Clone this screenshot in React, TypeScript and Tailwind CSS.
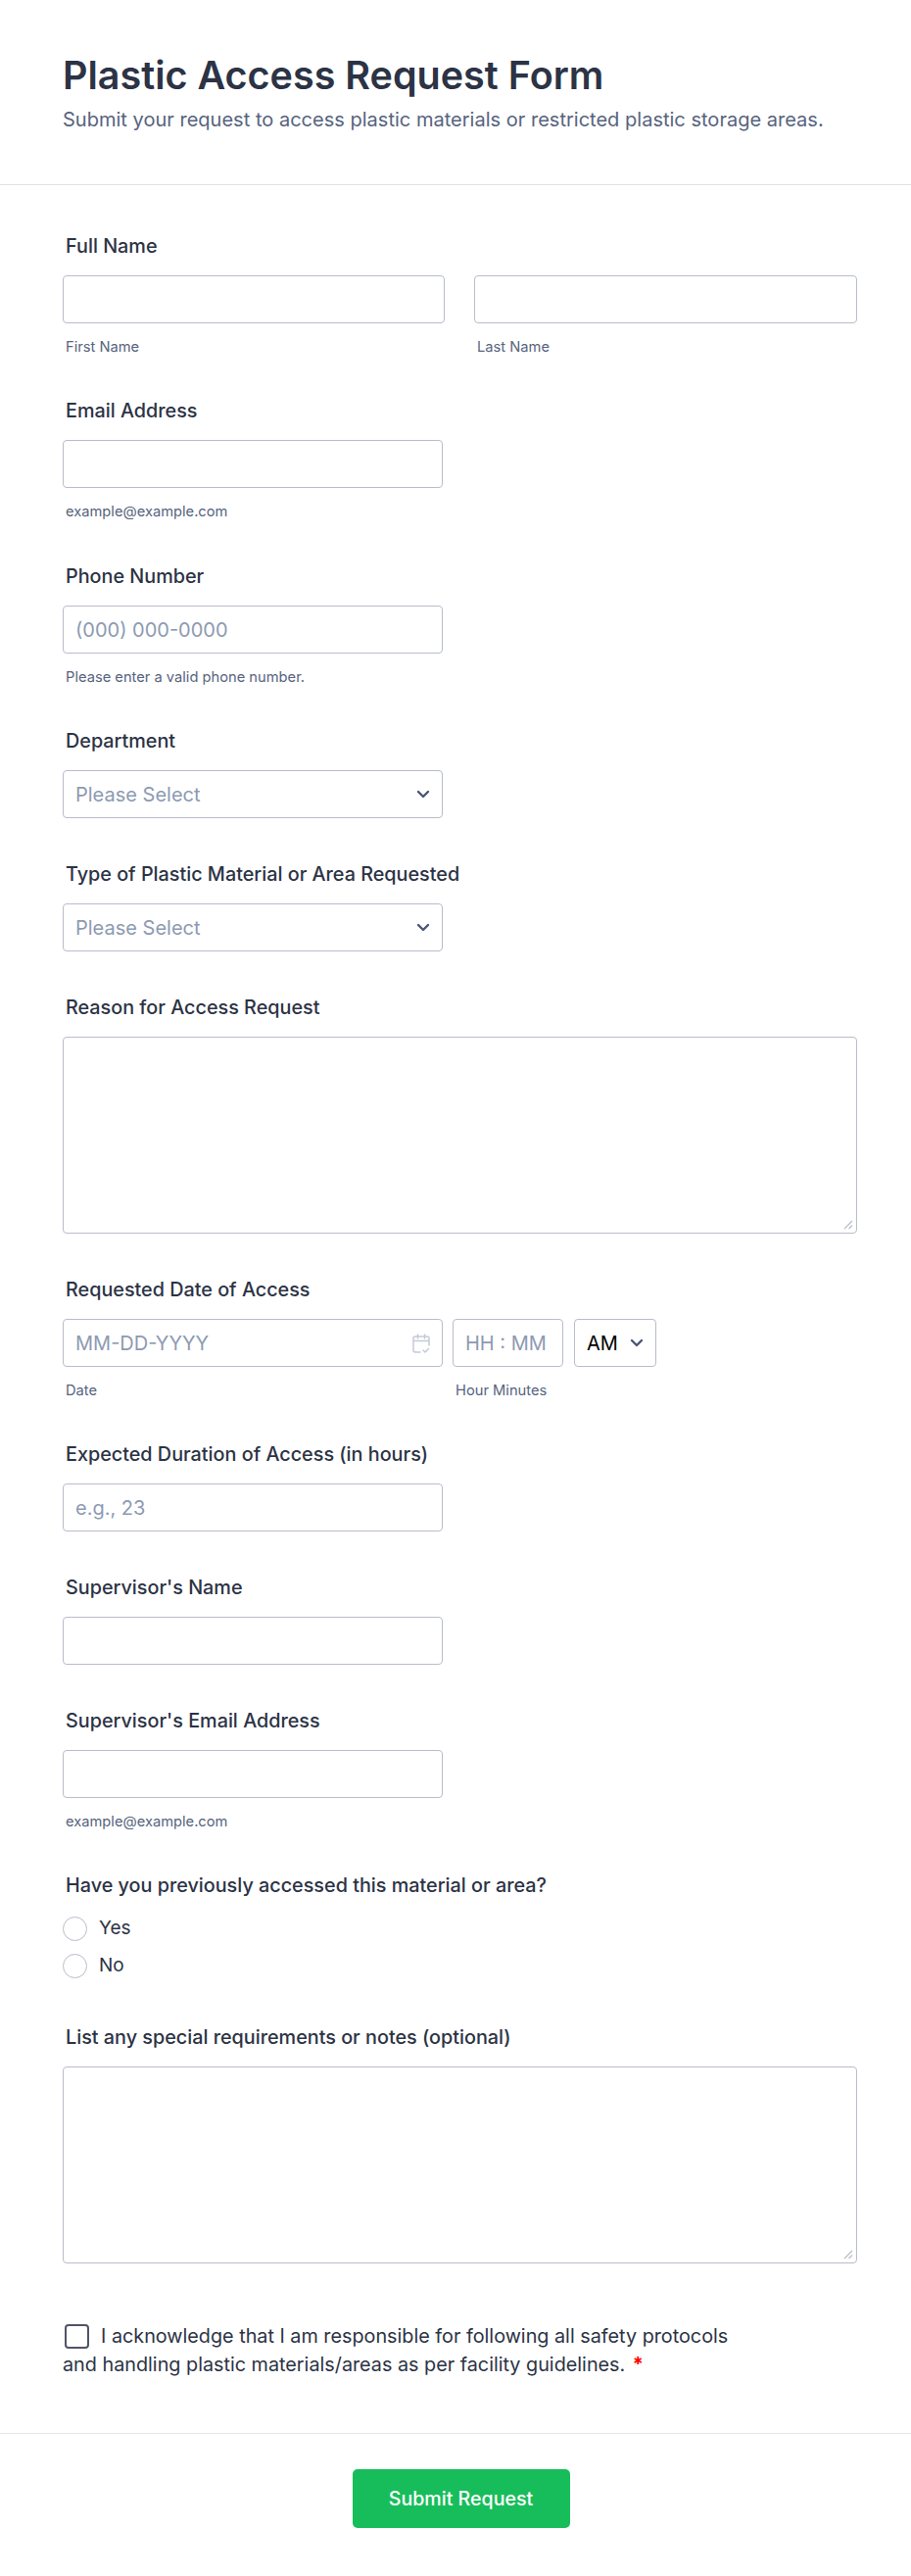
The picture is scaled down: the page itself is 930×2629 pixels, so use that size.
import React from "react";

const inter = "font-['Inter',sans-serif]";

function Label({ children }: { children: React.ReactNode }) {
  return <div className="-mt-[2px] pb-[2px] px-[3px] text-[19.8px] leading-[24px] font-medium text-[#2c3345]">{children}</div>;
}

function Sub({ children }: { children: React.ReactNode }) {
  return <div className="mt-[15px] px-[3px] text-[14.7px] leading-[18px] text-[#57647e]">{children}</div>;
}

function Field({ placeholder, className }: { placeholder?: string; className?: string }) {
  return (
    <div className={"h-[49px] rounded border border-[#b8bdc9] bg-white px-[12px] flex items-center text-[20px] text-[#8d9ab2] " + (className || "w-[388px]")}>
      {placeholder}
    </div>
  );
}

function Chevron() {
  return (
    <svg width="14" height="9" viewBox="0 0 14 9" fill="none" stroke="#4a5578" strokeWidth="2.4" strokeLinecap="round" strokeLinejoin="round">
      <path d="M2 2l5 5 5-5" />
    </svg>
  );
}

function Select() {
  return (
    <div className="h-[49px] w-[388px] rounded border border-[#b8bdc9] bg-white px-[12px] flex items-center justify-between text-[20px] text-[#8d9ab2]">
      Please Select
      <Chevron />
    </div>
  );
}

function TextArea() {
  return (
    <div className="relative mt-[16px] h-[201px] w-[811px] rounded border border-[#b8bdc9] bg-white">
      <svg className="absolute bottom-[3px] right-[3px]" width="10" height="10" viewBox="0 0 10 10" stroke="#b8bdc9" strokeWidth="1.2">
        <path d="M9 1L1 9M9 5.5L5.5 9" />
      </svg>
    </div>
  );
}

function Radio({ label }: { label: string }) {
  return (
    <div className="flex items-center gap-[12px] h-[25px] text-[19px] text-[#2c3345]">
      <div className="h-[25px] w-[25px] rounded-full border border-[#b8bdc9] bg-white" />
      {label}
    </div>
  );
}

export default function App() {
  return (
    <div className={inter + " w-[930px] h-[2629px] bg-white overflow-hidden"}>
      <header className="h-[189px] border-b border-[#dfe1e6] px-[64px] pt-[50px]">
        <h1 className="text-[39.5px] leading-[54px] font-semibold text-[#2c3345]">Plastic Access Request Form</h1>
        <p className="mt-[4px] text-[20.05px] leading-[28px] text-[#57647e]">Submit your request to access plastic materials or restricted plastic storage areas.</p>
      </header>

      <main className="px-[64px] pt-[52px]">
        <Label>Full Name</Label>
        <div className="mt-[16px] flex gap-[30px]">
          <div>
            <Field className="w-[390px]" />
            <Sub>First Name</Sub>
          </div>
          <div>
            <Field className="w-[391px]" />
            <Sub>Last Name</Sub>
          </div>
        </div>

        <div className="mt-[46px]">
          <Label>Email Address</Label>
          <div className="mt-[16px]"><Field /></div>
          <Sub>example@example.com</Sub>
        </div>

        <div className="mt-[47px]">
          <Label>Phone Number</Label>
          <div className="mt-[16px]"><Field placeholder="(000) 000-0000" /></div>
          <Sub>Please enter a valid phone number.</Sub>
        </div>

        <div className="mt-[46px]">
          <Label>Department</Label>
          <div className="mt-[16px]"><Select /></div>
        </div>

        <div className="mt-[47px]">
          <Label>Type of Plastic Material or Area Requested</Label>
          <div className="mt-[16px]"><Select /></div>
        </div>

        <div className="mt-[47px]">
          <Label>Reason for Access Request</Label>
          <TextArea />
        </div>

        <div className="mt-[47px]">
          <Label>Requested Date of Access</Label>
          <div className="mt-[16px] flex">
            <div>
              <div className="h-[49px] w-[388px] rounded border border-[#b8bdc9] px-[12px] flex items-center justify-between text-[20px] text-[#8d9ab2]">
                MM-DD-YYYY
                <svg width="18" height="20" viewBox="0 0 18 20" fill="none" stroke="#c3cad8" strokeWidth="1.5" strokeLinecap="round" strokeLinejoin="round">
                  <path d="M8 19H3a2 2 0 01-2-2V5a2 2 0 012-2h12a2 2 0 012 2v7M1 7.5h16M5.5 1v4M12.5 1v4M11 17l2 2 3.5-3.5" />
                </svg>
              </div>
              <Sub>Date</Sub>
            </div>
            <div className="ml-[10px]">
              <Field placeholder="HH : MM" className="w-[113px]" />
              <Sub>Hour Minutes</Sub>
            </div>
            <div className="ml-[11px] h-[49px] w-[84px] rounded border border-[#b8bdc9] px-[12px] flex items-center justify-between text-[20px] text-black">
              AM
              <Chevron />
            </div>
          </div>
        </div>

        <div className="mt-[46px]">
          <Label>Expected Duration of Access (in hours)</Label>
          <div className="mt-[16px]"><Field placeholder="e.g., 23" /></div>
        </div>

        <div className="mt-[47px]">
          <Label>Supervisor's Name</Label>
          <div className="mt-[16px]"><Field /></div>
        </div>

        <div className="mt-[47px]">
          <Label>Supervisor's Email Address</Label>
          <div className="mt-[16px]"><Field /></div>
          <Sub>example@example.com</Sub>
        </div>

        <div className="mt-[46px]">
          <Label>Have you previously accessed this material or area?</Label>
          <div className="mt-[18px] flex flex-col gap-[13px]">
            <Radio label="Yes" />
            <Radio label="No" />
          </div>
        </div>

        <div className="mt-[50px]">
          <Label>List any special requirements or notes (optional)</Label>
          <TextArea />
        </div>

        <div className="mt-[60px] text-[19.8px] leading-[29px] text-[#2c3345]">
          <div className="flex items-center gap-[12px] pl-[2px]">
            <div className="h-[25px] w-[25px] rounded border-2 border-[#4f5568]" />
            I acknowledge that I am responsible for following all safety protocols
          </div>
          <div>
            and handling plastic materials/areas as per facility guidelines. <span className="ml-[2px] font-bold text-[#ff0000]">*</span>
          </div>
        </div>
      </main>

      <footer className="mt-[55px] border-t border-[#e3e5ea] flex justify-center pt-[36px] pl-[11px]">
        <div className="h-[60px] w-[222px] rounded-[5px] bg-[#18bd5b] pt-[1px] flex items-center justify-center text-[19.6px] font-medium text-white">Submit Request</div>
      </footer>
    </div>
  );
}
